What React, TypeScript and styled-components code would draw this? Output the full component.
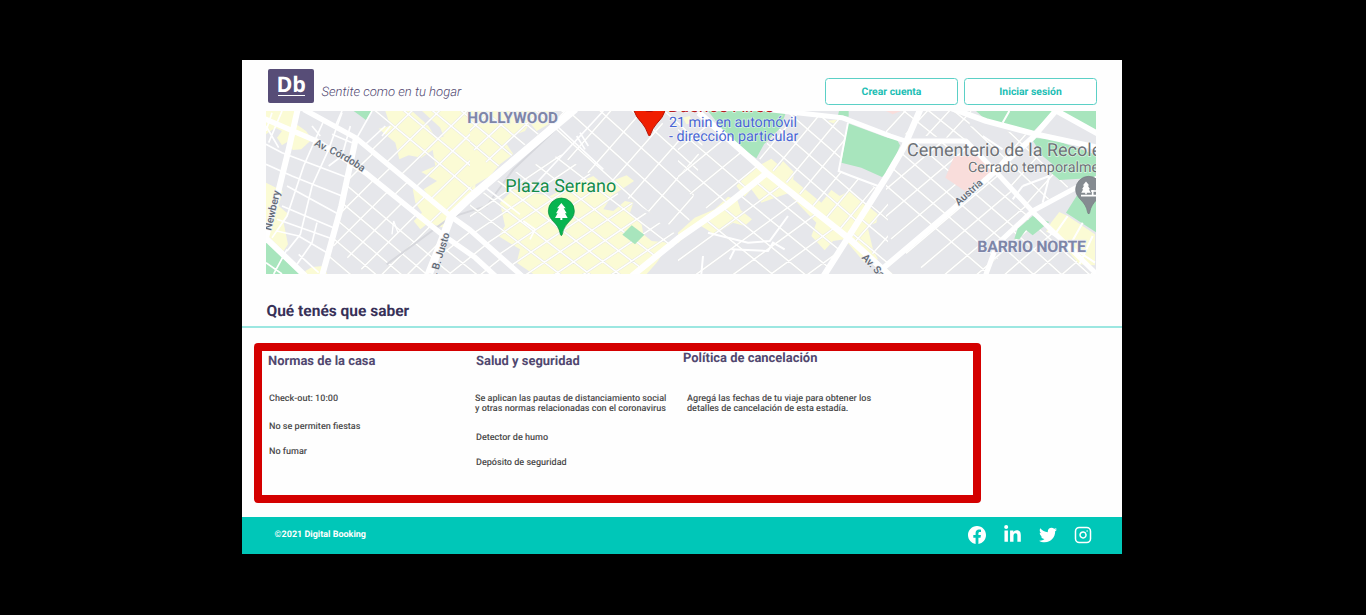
import React from "react";
import styled, { createGlobalStyle } from "styled-components";
import { BsFacebook } from "react-icons/bs";
import { FaLinkedinIn, FaTwitter } from "react-icons/fa";
import { FiInstagram } from "react-icons/fi";

const GlobalStyle = createGlobalStyle`
  * { box-sizing: border-box; }
  body { margin: 0; background: #000; font-family: Roboto, "Liberation Sans", sans-serif; text-rendering: geometricPrecision; }
`;

const Screen = styled.div`
  height: 615px;
  padding: 60px 244px 61px 242px;
  background: #000;
  overflow: hidden;
`;
const Page = styled.div`
  width: 880px;
  height: 494px;
  display: flex;
  flex-direction: column;
  background: #fefefe;
  overflow: hidden;
`;
const Header = styled.header`
  height: 51px;
  flex: none;
  display: flex;
  align-items: flex-start;
  padding: 9px 25px 0 26px;
`;
const Logo = styled.div`
  width: 46px;
  height: 34px;
  border-radius: 2px;
  background: #574d77;
  color: #fff;
  display: flex;
  flex-direction: column;
  align-items: center;
`;
const LogoText = styled.span`
  font: 700 21.5px/31px "Open Sans", sans-serif;
  height: 26px;
  letter-spacing: -0.2px;
`;
const LogoLine = styled.span`
  width: 27px;
  height: 1px;
  background: #fff;
`;
const Tagline = styled.span`
  margin: 15px auto 0 7.5px;
  font-size: 13.05px;
  line-height: 17px;
  font-style: italic;
  font-weight: 300;
  color: #4f466f;
  white-space: nowrap;
`;
const Actions = styled.nav`
  display: flex;
  gap: 6px;
  margin-top: 9px;
`;
const OutlineButton = styled.button`
  width: 133px;
  height: 27px;
  padding: 0;
  border: 1px solid #5bd0c6;
  border-radius: 3.5px;
  background: #fff;
  color: #1dbeb4;
  font: 700 10.4px/12px Roboto, sans-serif;
  text-rendering: geometricPrecision;
`;
const MapFrame = styled.div`
  width: 830px;
  height: 163px;
  flex: none;
  margin-left: 24px;
  svg { display: block; }
`;
const SectionTitle = styled.h2`
  margin: 0;
  height: 54px;
  flex: none;
  padding: 27px 0 0 24.5px;
  border-bottom: 2px solid #9ce7e1;
  color: #383158;
  font-size: 15.5px;
  line-height: 20px;
  font-weight: 700;
`;
const Policies = styled.section`
  display: flex;
  flex: none;
  width: 727px;
  height: 160px;
  margin: 15px 0 0 12px;
  background: #d40000;
  border-radius: 4px;
  padding: 8px;
`;
const PoliciesBody = styled.div`
  flex: 1;
  display: flex;
  background: #fefefe;
`;
const Column = styled.div<{ $width: number; $indent: number }>`
  width: ${(p) => p.$width}px;
  padding-left: ${(p) => p.$indent}px;
`;
const ColumnTitle = styled.h3<{ $raised?: boolean }>`
  margin: ${(p) => (p.$raised ? "-1px 0 27px" : "2px 0 24px")};
  font-size: 12.95px;
  line-height: 17px;
  font-weight: 700;
  color: #51486f;
  white-space: nowrap;
`;
const Rule = styled.p<{ $gap?: number; $shift?: number }>`
  margin: ${(p) => p.$gap ?? 0}px 0 0 ${(p) => p.$shift ?? 0}px;
  font-size: 9.05px;
  line-height: 10px;
  font-weight: 500;
  color: #4b4b4b;
  white-space: nowrap;
`;
const Footer = styled.footer`
  margin-top: auto;
  height: 37px;
  flex: none;
  display: flex;
  align-items: center;
  justify-content: space-between;
  padding: 0 30px 2px 32.5px;
  background: #00c7b8;
  color: #fff;
`;
const Copyright = styled.span`
  font-size: 9px;
  font-weight: 700;
`;
const Social = styled.div`
  display: flex;
  align-items: center;
  gap: 17px;
  svg { display: block; }
`;

type Pt = [number, number];

/* n parallel street segments starting at "from", each offset by "step" */
function rows(from: Pt, dir: Pt, step: Pt, n: number): string {
  let d = "";
  for (let i = 0; i < n; i++) {
    d += `M${from[0] + step[0] * i} ${from[1] + step[1] * i}l${dir[0]} ${dir[1]}`;
  }
  return d;
}

const YELLOW = "#fbfbd5";
const GREEN = "#a8e5bd";
const PINK = "#f9dddb";

const District = ({ id, area, d }: { id: string; area: string; d: string }) => (
  <>
    <clipPath id={id}><path d={area} /></clipPath>
    <g clipPath={`url(#${id})`} fill="none">
      <path d={d} stroke="#e4e5e2" strokeWidth="7" />
      <path d={d} stroke="#fff" strokeWidth="4.5" />
    </g>
  </>
);

const Tree = ({ fill }: { fill: string }) => (
  <path d="M0-26L-13-10H-7L-16 5H-11L-19 19H-3V25H3V19H19L11 5H16L7-10H13Z" fill={fill} />
);

const CityMap = () => (
  <svg width="830" height="163" viewBox="12 15 2490 489" fontFamily="Roboto, sans-serif">
    <rect x="12" y="15" width="2490" height="489" fill="#e6e7eb" />

    {/* west: Newbery / Córdoba */}
    <g>
      <path fill={YELLOW} d="M12 15H105L103 55L132 75L150 100L118 130L92 132L80 105L60 118L45 95L60 75L40 65L12 85Z" />
      <path fill={YELLOW} d="M12 230L62 255L50 300L80 325L65 350L78 415L65 435L12 385ZM130 495L150 483L185 480L195 504H130Z" />
      <path fill={YELLOW} d="M370 15H450L500 60L520 95L545 92L535 65L480 15H640V275L565 325L510 285L485 250L525 225L478 198L520 180L512 132L478 155L440 148L412 160L400 110L350 68L385 60Z" />
      <path fill={YELLOW} d="M452 248L500 270L560 330L545 365L500 350L475 370L455 345L480 320L460 290Z" />
      <path fill={GREEN} d="M12 400L125 504H12ZM275 15H330L312 42Z" />
      <g stroke="#fff" strokeWidth="5" fill="none">
        <path d="M12 115L60 140L250 212M12 175L90 210L240 270M75 240L230 325M60 300L225 370M45 340L210 398M45 375L110 390L195 440M185 45L160 100L125 180L75 330L30 395M240 20L200 130L150 240L115 385L75 435M165 350L150 410L105 475M110 445L170 500M12 60L50 125M60 15L20 110M30 20L12 75M75 430L35 504M12 470L60 504" />
        <path d="M150 60L175 90M240 15L220 60M330 15L285 95M370 60L305 120M265 60L240 150L200 180M210 85L270 110M385 60L360 90" />
      </g>
      <District id="ne" area="M330 15H640V275L570 330L285 95Z" d={rows([250, -60], [480, 396], [52, -28], 10) + rows([260, 200], [400, -390], [44, 37], 14)} />
      <District id="mid" area="M285 98L560 330L540 385L310 200L268 165Z" d={rows([180, 290], [300, -290], [52, 43], 12)} />
      <District id="sw" area="M265 165L540 385L505 504H185Z" d={rows([150, 150], [450, 380], [-10, 56], 9) + rows([130, 350], [400, -400], [42, 35], 16)} />
      <path d="M390 385L395 345L408 380" stroke="#fff" strokeWidth="4" fill="none" />
      <District id="se" area="M565 335L730 465L700 504H505Z" d={rows([400, 480], [300, -240], [46, 40], 8) + rows([450, 350], [300, 240], [0, 60], 4)} />
    </g>

    {/* Palermo Hollywood and Plaza Serrano */}
    <g transform="translate(624 0)">
      <path fill={YELLOW} d="M0 15H255L235 55L200 75L180 50L165 75L125 90L110 115L130 145L90 175L60 210L0 245Z" />
      <path fill={YELLOW} d="M90 290L130 250L240 270L310 235L370 210L400 235L470 208L492 225L425 270L400 310L430 315L465 285L490 290L480 320L515 355L520 385L545 405L600 410L560 470L530 504H190L140 470L150 430L85 390L105 360Z" />
      <path d="M310 20L130 190L50 300L-60 335L-250 475" fill="none" stroke="#d6d7dc" strokeWidth="6" />
      <District id="hw" area="M0 15H290L0 250Z" d={rows([-250, -100], [600, 500], [56, -18], 11) + rows([-60, 60], [300, -280], [36, 36], 10)} />
      <District id="serr" area="M0 295L95 215L275 145L640 400L500 504H150L0 365Z" d={rows([-140, 190], [560, 430], [54, -27], 14) + rows([-80, 385], [520, -350], [38, 32], 19)} />
      <District id="soho" area="M275 150L190 70L315 15H715L650 390Z" d={rows([130, 40], [600, 540], [54, -38], 12) + rows([120, 360], [350, -400], [54, 46], 12)} />
      <path d="M40 240L150 325M205 225L400 15M245 45L400 190M320 90L345 130M330 80L355 120M160 345L195 370L180 400" stroke="#fff" strokeWidth="5" fill="none" />
      <path fill={GREEN} d="M485 358L523 386L495 415L457 386Z" />
    </g>

    {/* Palermo: residential blocks */}
    <g transform="translate(1248 0)">
      <path fill={YELLOW} d="M0 380L50 335L110 310L150 272L178 282L188 312L222 340L200 360L165 350L110 386L85 370L60 355L0 412ZM15 35L35 30L45 50L25 55Z" />
      <path fill={YELLOW} d="M175 240L215 195L280 158L305 180L315 165L350 200L345 220L430 290L460 252L485 270L515 254L600 325L595 350L568 360L585 430L600 460L560 470L500 400L465 405L440 433L400 390L415 350L330 262L250 290L220 250L200 272ZM445 45L485 40L475 55Z" />
      <District id="c1" area="M0 30L70 40L265 205L0 385Z" d={rows([-180, 10], [420, 360], [60, -42], 9) + rows([-60, 180], [330, -270], [48, 42], 10)} />
      <District id="c2" area="M265 205L510 395L440 504H0V400Z" d={rows([-60, 225], [430, 350], [50, -38], 12) + rows([-50, 500], [480, -350], [54, 42], 10)} />
      <District id="c3" area="M325 20L510 45L480 190L595 245L510 390L240 155Z" d={rows([80, -50], [520, 450], [46, -34], 12) + rows([220, 190], [240, -290], [40, 35], 11)} />
      <District id="c4" area="M630 230V480L515 390Z" d={rows([460, 200], [300, 250], [0, 65], 5) + rows([520, 420], [150, -170], [40, 50], 5)} />
      <path fill={GREEN} d="M90 15H325L308 65L258 115L235 157L165 110ZM483 15H512V32L480 28Z" />
      <path fill={GREEN} d="M510 52L640 100V190L612 213L550 185L490 170Z" />
      <path d="M510 50L482 195L520 210L600 240M160 430L270 435L285 410L320 430M170 430L155 460M90 380L210 410L275 405L330 330M75 450L70 504" stroke="#fff" strokeWidth="6" fill="none" />
    </g>

    {/* Recoleta / Barrio Norte */}
    <g transform="translate(1872 0)">
      <path fill={PINK} d="M0 15H45L20 25Z" />
      <District id="d1" area="M60 105H240L440 318L300 504H0V220Z" d={rows([-300, -20], [650, 560], [54, -22], 14) + rows([-120, 270], [520, -440], [45, 43], 14)} />
      <path fill={PINK} d="M205 150L290 150L330 185L240 257L178 215Z" />
      <District id="d2" area="M440 318L627 490V504H300L330 420Z" d={rows([270, 350], [300, 270], [45, -35], 7) + rows([300, 480], [300, -260], [42, 38], 8)} />
      <District id="d3" area="M250 60L450 90L560 235L440 310L240 105Z" d={rows([180, 80], [350, 330], [64, -30], 5) + rows([280, 240], [180, -200], [50, 50], 5)} />
      <District id="d4" area="M0 15H260L240 100L0 80Z" d={rows([10, -20], [200, 160], [60, -12], 4) + rows([-30, 110], [120, -130], [55, 12], 5)} />
      <path fill={YELLOW} d="M520 318L545 330L627 385V478L580 475L550 440L520 385L480 378L495 350ZM0 485L20 504H0Z" />
      <path fill={GREEN} d="M270 15H440L500 15H640V80L580 50L500 18L440 78L300 42Z" />
      <path fill={GREEN} d="M0 95L32 100L42 118L30 150L0 200ZM435 95L500 100L640 150V215L520 222L495 200L500 175L470 150Z" />
      <path fill={GREEN} d="M640 235V385L540 320L575 265ZM395 368L440 330L490 348L440 388L420 372L400 400L385 398Z" />
      <path d="M485 375L627 470M545 330L510 380M590 350L545 430M620 390L580 475M410 240L380 280M490 210L470 290M410 240L490 210M370 15L350 50M290 90L350 130" stroke="#fff" strokeWidth="6" fill="none" />
    </g>

    {/* avenues */}
    <g stroke="#fff" fill="none" strokeLinejoin="round">
      <path strokeWidth="16" d="M125 10L282 96L565 330L624 372L780 510M0 35L170 108L310 200L540 385L640 455L700 510" />
      <path strokeWidth="18" d="M107 10L80 130L48 260L8 410M282 95L238 300L180 510M8 393L130 510" />
      <path strokeWidth="24" d="M498 510L530 430L568 328L624 275L940 8" />
      <path strokeWidth="19" d="M1110 510L1248 398L1390 300L1513 202M1310 20L1513 200L1758 395L1885 510M1685 510L1758 395L1878 205L1925 125L1975 10" />
      <path strokeWidth="15" d="M1510 10L1740 35L1885 90L1930 105H2112L2190 185L2312 317L2510 510" />
      <path strokeWidth="17" d="M1862 488L2072 310L2312 95L2385 10M2070 8L2172 45L2322 85L2510 125M2372 8L2510 85" />
      <path strokeWidth="15" d="M2170 510L2205 415L2312 315L2460 235L2510 215" />
    </g>

    {/* labels */}
    <g fill="#626975" stroke="#eceef1" strokeWidth="4" paintOrder="stroke" fontSize="31" fontWeight="500">
      <path id="cordoba" d="M155 118L225 152Q270 175 320 212" fill="none" stroke="none" />
      <text><textPath href="#cordoba">Av. Córdoba</textPath></text>
      <text transform="translate(27 375) rotate(-77)">Newbery</text>
      <text transform="translate(520 525) rotate(-73)">J. B. Justo</text>
      <text transform="translate(1798 456) rotate(47)">Av. Santa Fe</text>
      <text transform="translate(2090 300) rotate(-42)">Austria</text>
    </g>
    <g fill="#7e86a8" stroke="#f0f1f6" strokeWidth="5" paintOrder="stroke" fontWeight="700">
      <text x="616" y="51" fontSize="46" textLength="272">HOLLYWOOD</text>
      <text x="2146" y="437" fontSize="48" textLength="326">BARRIO NORTE</text>
    </g>
    <g stroke="#fff" strokeWidth="4" strokeOpacity=".6" paintOrder="stroke">
      <text x="730" y="258" fontSize="54" fill="#148c4b" textLength="333">Plaza Serrano</text>
      <text x="1218" y="19" fontSize="54" fill="#b61d1d" textLength="318">Buenos Aires</text>
      <text x="1221" y="62" fontSize="43" fill="#4966d4" textLength="384">21 min en automóvil</text>
      <text x="1221" y="105" fontSize="43" fill="#4966d4" textLength="388">- dirección particular</text>
      <text x="1935" y="150" fontSize="54" fill="#6d7176">Cementerio de la Recoleta</text>
      <text x="2118" y="197" fontSize="43" fill="#6d7176">Cerrado temporalmente</text>
    </g>

    {/* pins */}
    <path d="M1115 12H1210Q1204 34 1183 54Q1172 66 1164 88Q1162 92 1160 88Q1151 63 1140 51Q1122 34 1115 12Z" fill="#f01e00" stroke="#b51405" strokeWidth="3" />
    <ellipse cx="1162" cy="13" rx="13" ry="5" fill="#a50d0d" />
    <path d="M898 276a39 39 0 0 1 39 39c0 30-30 32-36 70q-3 8-6 0c-6-38-36-40-36-70a39 39 0 0 1 39-39Z" fill="#08b450" stroke="#078b3e" strokeWidth="2" />
    <g transform="translate(898 317)"><Tree fill="#fff" /></g>
    <path d="M2480 211a39 39 0 0 1 39 39c0 30-30 32-36 70q-3 8-6 0c-6-38-36-40-36-70a39 39 0 0 1 39-39Z" fill="#858b91" stroke="#74797e" strokeWidth="2" />
    <g transform="translate(2472 246) scale(.75)"><Tree fill="#fff" /></g>
    <path d="M2457 269H2510M2492 252V269M2487 255H2510" stroke="#fff" strokeWidth="5" />
  </svg>
);

export default function App() {
  return (
    <>
      <GlobalStyle />
      <Screen>
        <Page>
          <Header>
            <Logo>
              <LogoText>Db</LogoText>
              <LogoLine />
            </Logo>
            <Tagline>Sentite como en tu hogar</Tagline>
            <Actions>
              <OutlineButton>Crear cuenta</OutlineButton>
              <OutlineButton>Iniciar sesión</OutlineButton>
            </Actions>
          </Header>
          <MapFrame>
            <CityMap />
          </MapFrame>
          <SectionTitle>Qué tenés que saber</SectionTitle>
          <Policies>
            <PoliciesBody>
              <Column $width={213} $indent={6}>
                <ColumnTitle>Normas de la casa</ColumnTitle>
                <Rule $shift={1}>Check-out: 10:00</Rule>
                <Rule $shift={1} $gap={18}>No se permiten fiestas</Rule>
                <Rule $shift={1} $gap={15}>No fumar</Rule>
              </Column>
              <Column $width={208} $indent={1}>
                <ColumnTitle>Salud y seguridad</ColumnTitle>
                <Rule $shift={-1}>
                  Se aplican las pautas de distanciamiento social
                  <br />y otras normas relacionadas con el coronavirus
                </Rule>
                <Rule $gap={19}>Detector de humo</Rule>
                <Rule $gap={15}>Depósito de seguridad</Rule>
              </Column>
              <Column $width={290} $indent={0}>
                <ColumnTitle $raised>Política de cancelación</ColumnTitle>
                <Rule $shift={4}>
                  Agregá las fechas de tu viaje para obtener los
                  <br />
                  detalles de cancelación de esta estadía.
                </Rule>
              </Column>
            </PoliciesBody>
          </Policies>
          <Footer>
            <Copyright>©2021 Digital Booking</Copyright>
            <Social>
              <BsFacebook size={18} />
              <FaLinkedinIn size={19} />
              <FaTwitter size={18} />
              <FiInstagram size={18} />
            </Social>
          </Footer>
        </Page>
      </Screen>
    </>
  );
}
